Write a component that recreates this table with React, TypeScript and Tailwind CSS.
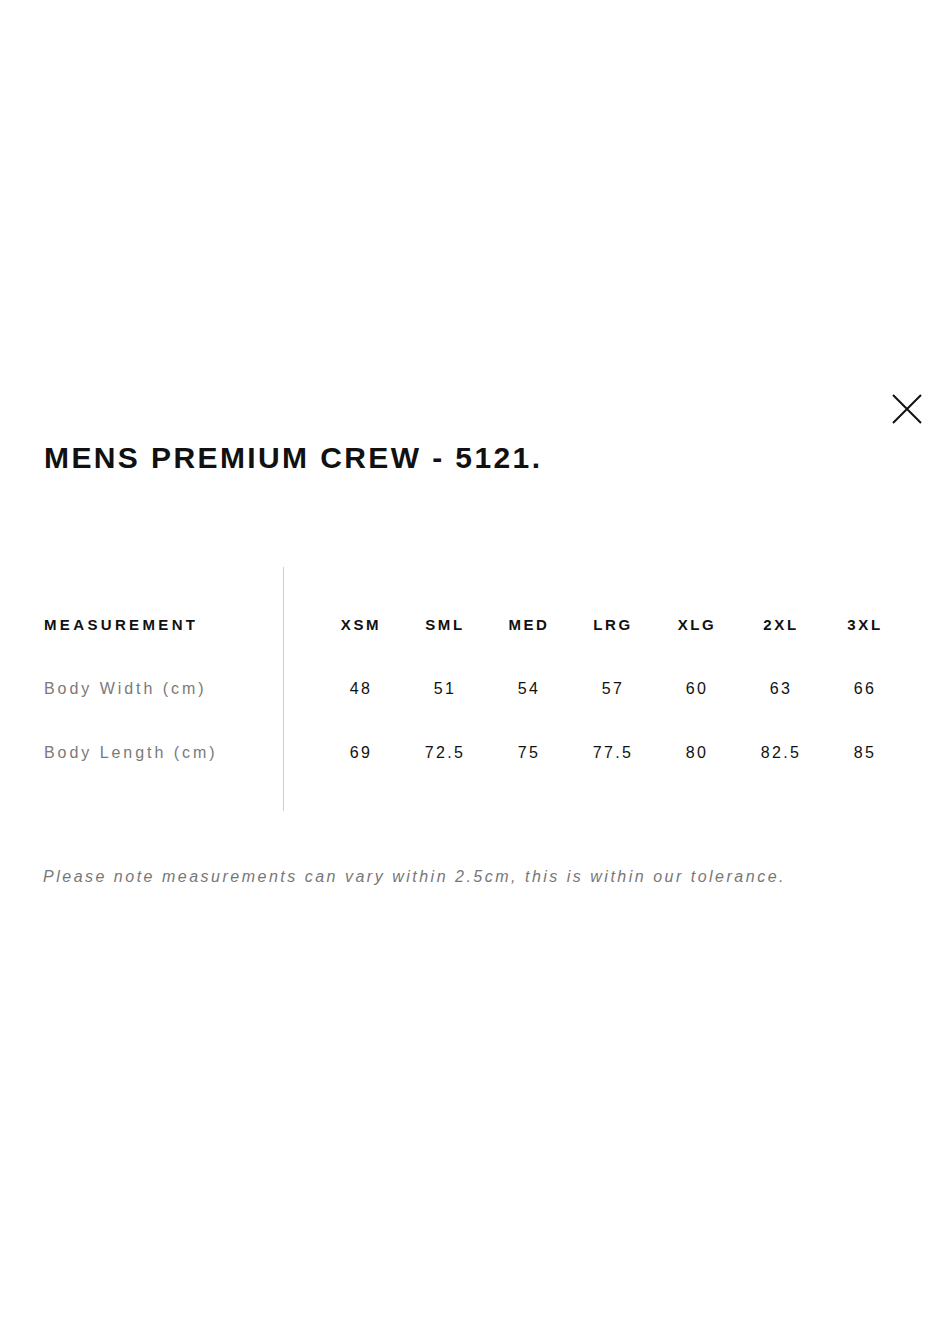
const sizes = ["XSM", "SML", "MED", "LRG", "XLG", "2XL", "3XL"];

const rows = [
  { label: "Body Width (cm)", values: ["48", "51", "54", "57", "60", "63", "66"] },
  { label: "Body Length (cm)", values: ["69", "72.5", "75", "77.5", "80", "82.5", "85"] },
];

function CloseIcon() {
  return (
    <svg width="30" height="30" viewBox="0 0 30 30" fill="none" stroke="#111" strokeWidth="2">
      <path d="M1 1 L29 29 M29 1 L1 29" />
    </svg>
  );
}

export default function App() {
  return (
    <div className="w-[930px] min-h-[1320px] bg-white font-['Liberation_Sans',Arial,sans-serif] text-[#111]">
      <div className="flex justify-end pt-[394px] pr-[8px]">
        <button className="p-0">
          <CloseIcon />
        </button>
      </div>

      <h1 className="pl-[44px] mt-[16px] text-[30px] leading-[36px] font-bold tracking-[2.4px]">
        MENS PREMIUM CREW - 5121.
      </h1>

      <div className="flex pl-[44px] mt-[91px]">
        <div className="w-[240px] border-r border-[#cfcfcf] py-[26px]">
          <div className="h-[64px] flex items-center text-[15px] font-bold tracking-[3.35px]">MEASUREMENT</div>
          {rows.map((r) => (
            <div key={r.label} className="h-[64px] flex items-center text-[16px] tracking-[2.95px] text-[#7a7a7a]">
              {r.label}
            </div>
          ))}
        </div>
        <div className="ml-[35px] py-[26px]">
          <div className="grid grid-cols-7 w-[588px] h-[64px] items-center">
            {sizes.map((s) => (
              <div key={s} className="text-center text-[15px] font-bold tracking-[2.6px]">{s}</div>
            ))}
          </div>
          {rows.map((r) => (
            <div key={r.label} className="grid grid-cols-7 w-[588px] h-[64px] items-center">
              {r.values.map((v, i) => (
                <div key={i} className="text-center text-[16px] tracking-[2.4px]">{v}</div>
              ))}
            </div>
          ))}
        </div>
      </div>

      <p className="pl-[43px] mt-[54px] text-[16px] italic tracking-[2.5px] text-[#777]">
        Please note measurements can vary within 2.5cm, this is within our tolerance.
      </p>
    </div>
  );
}
